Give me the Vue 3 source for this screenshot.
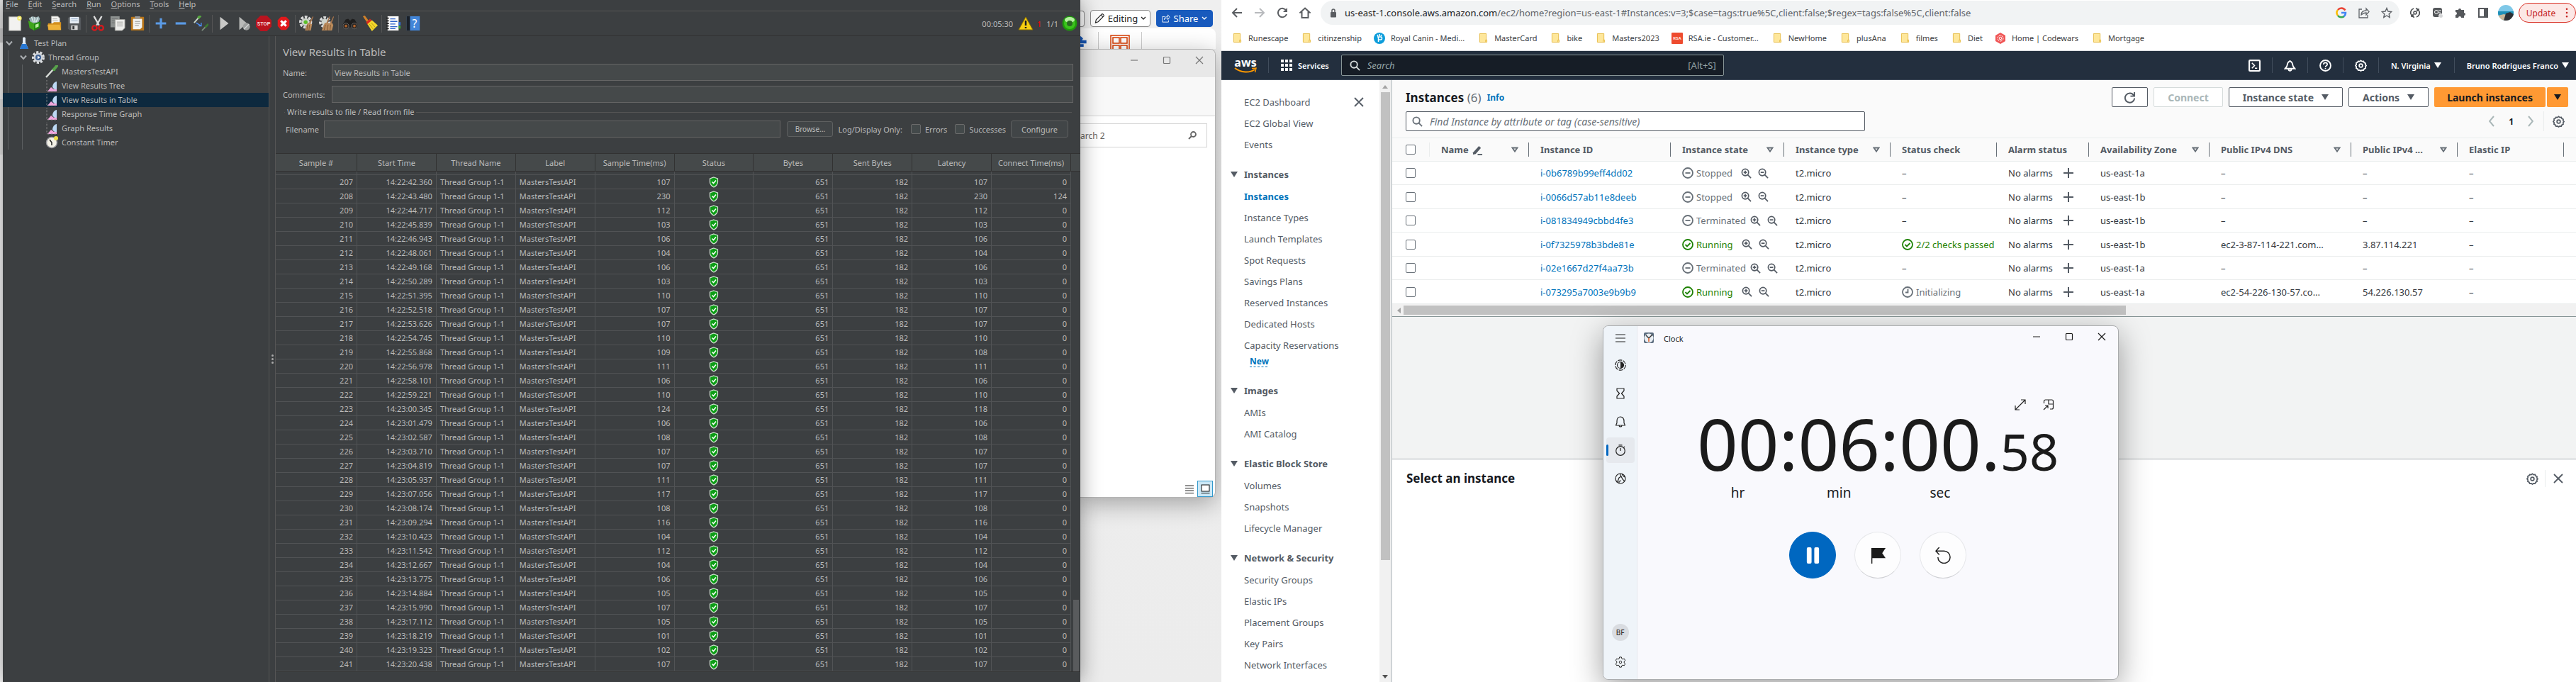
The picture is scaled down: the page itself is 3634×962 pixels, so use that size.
<script setup>
const menus = ['File', 'Edit', 'Search', 'Run', 'Options', 'Tools', 'Help']

const toolGroups = [
  ['new', 'templates', 'open', 'save'],
  ['cut', 'copy', 'paste'],
  ['plus', 'minus', 'toggle'],
  ['play', 'playnp', 'stop', 'shutdown'],
  ['clear', 'clearall'],
  ['binoculars', 'broom'],
  ['functions', 'help'],
]

const tree = [
  { label: 'MastersTestAPI', icon: 'pipette' },
  { label: 'View Results Tree', icon: 'graph' },
  { label: 'View Results in Table', icon: 'graph', selected: true },
  { label: 'Response Time Graph', icon: 'graph' },
  { label: 'Graph Results', icon: 'graph' },
  { label: 'Constant Timer', icon: 'timer' },
]

const sampleHeads = ['Sample #', 'Start Time', 'Thread Name', 'Label', 'Sample Time(ms)', 'Status', 'Bytes', 'Sent Bytes', 'Latency', 'Connect Time(ms)']

const samples = [
  ['22:42.360', 107], ['22:43.480', 230, 230, 124], ['22:44.717', 112], ['22:45.839', 103], ['22:46.943', 106],
  ['22:48.061', 104], ['22:49.168', 106], ['22:50.289', 103], ['22:51.395', 110], ['22:52.518', 107],
  ['22:53.626', 107], ['22:54.745', 110], ['22:55.868', 109, 108], ['22:56.978', 111], ['22:58.101', 106],
  ['22:59.221', 110], ['23:00.345', 124, 118], ['23:01.479', 106], ['23:02.587', 108], ['23:03.710', 107],
  ['23:04.819', 107], ['23:05.937', 111], ['23:07.056', 117], ['23:08.174', 108], ['23:09.294', 116],
  ['23:10.423', 104], ['23:11.542', 112], ['23:12.667', 104], ['23:13.775', 106], ['23:14.884', 105],
  ['23:15.990', 107], ['23:17.112', 105], ['23:18.219', 101], ['23:19.323', 102], ['23:20.438', 107],
].map(([t, ms, latency = ms, connect = 0], i) => ({ id: 207 + i, start: '14:' + t, ms, latency, connect }))

const bookmarks = [
  { t: 'Runescape' }, { t: 'citinzenship' }, { t: 'Royal Canin - Medi...', icon: 'royal' }, { t: 'MasterCard' }, { t: 'bike' },
  { t: 'Masters2023' }, { t: 'RSA.ie - Customer...', icon: 'rsa' }, { t: 'NewHome' }, { t: 'plusAna' }, { t: 'filmes' },
  { t: 'Diet' }, { t: 'Home | Codewars', icon: 'codewars' }, { t: 'Mortgage' },
]

const navTop = ['EC2 Dashboard', 'EC2 Global View', 'Events']
const navGroups = [
  { title: 'Instances', items: ['Instances', 'Instance Types', 'Launch Templates', 'Spot Requests', 'Savings Plans', 'Reserved Instances', 'Dedicated Hosts', 'Capacity Reservations'], isNew: true },
  { title: 'Images', items: ['AMIs', 'AMI Catalog'] },
  { title: 'Elastic Block Store', items: ['Volumes', 'Snapshots', 'Lifecycle Manager'] },
  { title: 'Network & Security', items: ['Security Groups', 'Elastic IPs', 'Placement Groups', 'Key Pairs', 'Network Interfaces'] },
]

const columns = [
  { t: 'Name', edit: true, sort: true }, { t: 'Instance ID' }, { t: 'Instance state', sort: true }, { t: 'Instance type', sort: true },
  { t: 'Status check' }, { t: 'Alarm status' }, { t: 'Availability Zone', sort: true }, { t: 'Public IPv4 DNS', sort: true },
  { t: 'Public IPv4 ...', sort: true }, { t: 'Elastic IP' },
]

const instances = [
  { id: 'i-0b6789b99eff4dd02', state: 'Stopped', check: '', zone: 'us-east-1a', dns: '–', ip: '–' },
  { id: 'i-0066d57ab11e8deeb', state: 'Stopped', check: '', zone: 'us-east-1b', dns: '–', ip: '–' },
  { id: 'i-081834949cbbd4fe3', state: 'Terminated', check: '', zone: 'us-east-1b', dns: '–', ip: '–' },
  { id: 'i-0f7325978b3bde81e', state: 'Running', check: '2/2 checks passed', zone: 'us-east-1b', dns: 'ec2-3-87-114-221.com…', ip: '3.87.114.221' },
  { id: 'i-02e1667d27f4aa73b', state: 'Terminated', check: '', zone: 'us-east-1a', dns: '–', ip: '–' },
  { id: 'i-073295a7003e9b9b9', state: 'Running', check: 'Initializing', zone: 'us-east-1a', dns: 'ec2-54-226-130-57.co…', ip: '54.226.130.57' },
]

const clockNav = [
  { icon: 'focus', name: 'Focus sessions' }, { icon: 'hourglass', name: 'Timer' }, { icon: 'alarm', name: 'Alarm' },
  { icon: 'stopwatch', name: 'Stopwatch', on: true }, { icon: 'world', name: 'World clock' },
]
</script>

<template>
  <div class="desktop">
    <svg class="sprite" aria-hidden="true">
      <symbol id="new" viewBox="0 0 24 24"><rect x="3" y="2" width="18" height="21" fill="#f2f2f0" stroke="#b9b9b5" /><circle cx="19" cy="4" r="3.5" fill="#f6ec6a" /><circle cx="19" cy="4" r="1.5" fill="#fffbd0" /></symbol>
      <symbol id="templates" viewBox="0 0 24 24"><path d="M3 4l6-3 4 2 5-2 2 4-3 7H6z" fill="#9ab3b5" /><path d="M7 2l3 8M12 2l0 8M17 3l-3 7" stroke="#dfe9ea" stroke-width="1.5" /><path d="M2 8l9 4v11l-7-4z" fill="#3ea51c" /><path d="M11 12l10-3-1 10-9 4z" fill="#1f8a0d" /><path d="M13 14l5-2v5l-5 2z" fill="#b8ee9d" /></symbol>
      <symbol id="open" viewBox="0 0 24 24"><path d="M7 1h10l3 3v9H7z" fill="#f4f4f1" stroke="#a3a39e" /><path d="M9 5h7M9 8h8" stroke="#a9a9a4" /><path d="M2 12h7l2-2h11v12H2z" fill="#d28f1e" /><path d="M1 14h19l2 8H3z" fill="#eeb23a" /></symbol>
      <symbol id="save" viewBox="0 0 24 24"><path d="M2 3h20v19H4l-2-2z" fill="#54585c" /><rect x="5" y="2" width="14" height="10" fill="#e6edf5" /><path d="M7 5h10M7 8h10" stroke="#8fa9c4" /><rect x="7" y="15" width="10" height="7" fill="#d9dadb" /><rect x="9" y="16" width="3" height="5" fill="#34373a" /></symbol>
      <symbol id="cut" viewBox="0 0 24 24"><path d="M6 1l8 14M18 1l-8 14" stroke="#dcdcdc" stroke-width="2.5" /><circle cx="7" cy="19" r="3.5" fill="none" stroke="#d8191c" stroke-width="2.5" /><circle cx="17" cy="19" r="3.5" fill="none" stroke="#d8191c" stroke-width="2.5" /></symbol>
      <symbol id="copy" viewBox="0 0 24 24"><rect x="1" y="1" width="14" height="17" fill="#8d9190" /><path d="M3 5h9M3 8h9M3 11h9" stroke="#6d7070" /><path d="M8 6h15v13l-4 4H8z" fill="#ededeb" stroke="#a0a09b" /><path d="M11 10h9M11 13h9M11 16h9" stroke="#9b9b98" /></symbol>
      <symbol id="paste" viewBox="0 0 24 24"><rect x="2" y="2" width="20" height="21" rx="1" fill="#b87519" /><path d="M5 5h14v13l-3 3H5z" fill="#f3f3f0" /><rect x="8" y="1" width="8" height="4" fill="#97999b" /><path d="M8 9h8M8 12h8M8 15h6" stroke="#8f8f8b" /></symbol>
      <symbol id="plus" viewBox="0 0 24 24"><path d="M12 4v16M4 12h16" stroke="#5b9be6" stroke-width="3.5" /></symbol>
      <symbol id="minus" viewBox="0 0 24 24"><path d="M4 12h16" stroke="#5b9be6" stroke-width="3.5" /></symbol>
      <symbol id="toggle" viewBox="0 0 24 24"><path d="M2 11l8-9" stroke="#cfdccf" stroke-width="2" /><path d="M8 4l4-4" stroke="#55a63f" stroke-width="4" /><path d="M5 11l8 5m0-5v5h-4" stroke="#4b8cf0" stroke-width="1.5" fill="none" /><path d="M14 23l8-8" stroke="#7c8a7c" stroke-width="2" /><path d="M19 18l5-5" stroke="#3c7a2f" stroke-width="3" /></symbol>
      <symbol id="play" viewBox="0 0 24 24"><path d="M6 2l13 10L6 22z" fill="#c9c9c7" /></symbol>
      <symbol id="playnp" viewBox="0 0 24 24"><path d="M5 2l12 10L5 22z" fill="#b9bab8" /><circle cx="16" cy="17" r="5.5" fill="#9d9f9e" /><path d="M12 21l8-8" stroke="#d4d5d4" stroke-width="1.5" /></symbol>
      <symbol id="stop" viewBox="0 0 24 24"><path d="M7 0h10l7 7v10l-7 7H7l-7-7V7z" fill="#b9141f" /><text x="12" y="15" text-anchor="middle" font-size="8" font-weight="700" font-family="Roboto, sans-serif" fill="#f5d9da">STOP</text></symbol>
      <symbol id="shutdown" viewBox="0 0 24 24"><path d="M8 2h8l5 5v9l-5 6H8l-5-6V7z" fill="#e0191b" /><path d="M8 8l8 8M16 8l-8 8" stroke="#fff" stroke-width="3.5" /></symbol>
      <symbol id="clear" viewBox="0 0 24 24"><circle cx="10" cy="10" r="8" fill="none" stroke="#dadada" stroke-width="4" stroke-dasharray="4 2" /><circle cx="10" cy="10" r="6" fill="#cfd4cc" /><circle cx="10" cy="10" r="3" fill="#5cbf2a" /><path d="M21 1l1 1-5 11-2-1z" fill="#a9744a" /><path d="M13 11l7 2-2 10H9z" fill="#b98a5b" /><path d="M13 14l-1 8M16 14l-1 9" stroke="#80552e" /></symbol>
      <symbol id="clearall" viewBox="0 0 24 24"><circle cx="9" cy="10" r="7" fill="none" stroke="#dadada" stroke-width="4" stroke-dasharray="4 2" /><circle cx="9" cy="10" r="5" fill="#cfd4cc" /><path d="M16 1l1 1-4 11-2-1zM22 1l1 1-4 11-2-1z" fill="#a9744a" /><path d="M9 11l12 1 1 3-2 8H4z" fill="#b98a5b" /><path d="M10 14l-2 8M14 14l-1 9M18 14l-1 8" stroke="#80552e" /></symbol>
      <symbol id="binoculars" viewBox="0 0 24 24"><path d="M5 6l4-1 3 3 3-3 4 1 5 9v3H0v-3z" fill="#1e1e1e" /><circle cx="5.5" cy="16" r="4.5" fill="#2b2623" stroke="#6a6a6a" /><circle cx="18.5" cy="16" r="4.5" fill="#2b2623" stroke="#6a6a6a" /><circle cx="5.5" cy="16" r="2" fill="#b0632c" /><circle cx="18.5" cy="16" r="2" fill="#b0632c" /></symbol>
      <symbol id="broom" viewBox="0 0 24 24"><path d="M1 1l3-1 6 8-3 2z" fill="#d0812a" /><path d="M6 10l6-5 3 3-7 6z" fill="#d92a1d" /><path d="M8 13l7-6 9 8-9 9z" fill="#f3d62b" /><path d="M11 13l6 8M14 11l6 7" stroke="#b99610" /></symbol>
      <symbol id="functions" viewBox="0 0 24 24"><rect x="3" y="1" width="17" height="22" fill="#fafafa" /><path d="M20 10h3v5h-3z" fill="#2f6fd8" /><path d="M20 16h3v4h-3z" fill="#38a832" /><path d="M7 5h8M7 9h11M7 13h8M7 17h11M7 20h8" stroke="#2d62c9" stroke-width="1.5" /><path d="M1 4h4M1 8h4M1 12h4M1 16h4M1 20h4" stroke="#222" stroke-width="2" /></symbol>
      <symbol id="help" viewBox="0 0 24 24"><rect x="2" y="1" width="20" height="22" fill="#4285d8" /><rect x="2" y="1" width="5" height="22" fill="#1a2028" /><text x="14" y="18" text-anchor="middle" font-size="17" font-family="Noto Sans, sans-serif" fill="#fff">?</text></symbol>
      <symbol id="flask" viewBox="0 0 18 18"><path d="M7 1h4v7l4 9H3l4-9z" fill="#d8e6f4" /><path d="M6 10h6l3 7H3z" fill="#2878d4" /><path d="M9 0v8" stroke="#f6fafe" /></symbol>
      <symbol id="gear" viewBox="0 0 18 18"><circle cx="9" cy="9" r="7" fill="none" stroke="#dfe1e3" stroke-width="4" stroke-dasharray="3 2" /><circle cx="9" cy="9" r="6.5" fill="#cfd3d8" /><circle cx="9" cy="9" r="4" fill="#3c5f92" /><path d="M8 6.5l3.5 2.5L8 11.5z" fill="#fff" /></symbol>
      <symbol id="pipette" viewBox="0 0 18 18"><path d="M1 17l10-11" stroke="#d8dcd8" stroke-width="2.5" /><path d="M10 4l4 4" stroke="#2f6d28" stroke-width="2" /><path d="M12 6l4-5" stroke="#58a34b" stroke-width="4" stroke-linecap="round" /></symbol>
      <symbol id="graph" viewBox="0 0 18 18"><path d="M3 17l5-6 4 3 4-3v6z" fill="#f0a6dd" /><path d="M10 11c0-4 3-8 6-8v11c-2 0-4 0-6-3z" fill="#bcd8f4" /><path d="M2 1v16h14" stroke="#8d8d8d" fill="none" stroke-dasharray="1 1" /></symbol>
      <symbol id="timer" viewBox="0 0 18 18"><circle cx="9" cy="9" r="7.5" fill="#f3f1e6" stroke="#97979d" stroke-width="1.5" /><path d="M6 5l3 4v4" stroke="#222" stroke-width="1.5" fill="none" /><circle cx="15" cy="3" r="3" fill="#efe04e" /></symbol>
      <symbol id="shield" viewBox="0 0 14 16"><path d="M7 1l5.5 2v5c0 3-3 6-5.5 7C4.500 14 1.500 11 1.500 8V3z" fill="#0d9d16" stroke="#cfe3cf" stroke-width="1.2" /><path d="M4.500 7.500l2 2 3.500-4" stroke="#fff" stroke-width="1.6" fill="none" /></symbol>
      <symbol id="chev" viewBox="0 0 10 8"><path d="M1 1.500l4 4.500 4-4.500" fill="none" stroke="#a9adb0" stroke-width="2" /></symbol>
      <symbol id="search" viewBox="0 0 16 16"><circle cx="6.5" cy="6.5" r="5" fill="none" stroke="currentColor" stroke-width="2" /><path d="M10 10l5 5" stroke="currentColor" stroke-width="2" /></symbol>
      <symbol id="zin" viewBox="0 0 16 16"><circle cx="6.5" cy="6.5" r="5" fill="none" stroke="currentColor" stroke-width="1.8" /><path d="M10 10l5 5M6.500 4v5M4 6.500h5" stroke="currentColor" stroke-width="1.8" /></symbol>
      <symbol id="zout" viewBox="0 0 16 16"><circle cx="6.5" cy="6.5" r="5" fill="none" stroke="currentColor" stroke-width="1.8" /><path d="M10 10l5 5M4 6.500h5" stroke="currentColor" stroke-width="1.8" /></symbol>
      <symbol id="stopped" viewBox="0 0 16 16"><circle cx="8" cy="8" r="7" fill="none" stroke="currentColor" stroke-width="1.8" /><path d="M4.500 8h7" stroke="currentColor" stroke-width="1.8" /></symbol>
      <symbol id="ok" viewBox="0 0 16 16"><circle cx="8" cy="8" r="7" fill="none" stroke="currentColor" stroke-width="1.8" /><path d="M4.500 8l2.500 2.500 4.500-4.500" stroke="currentColor" stroke-width="1.8" fill="none" /></symbol>
      <symbol id="pending" viewBox="0 0 16 16"><circle cx="8" cy="8" r="7" fill="none" stroke="currentColor" stroke-width="1.8" /><path d="M8.500 3.500v5H5" stroke="currentColor" stroke-width="1.8" fill="none" /></symbol>
      <symbol id="cog" viewBox="0 0 18 18"><path d="M9 1.500l1.800 1.300 2.200-.2.900 2 2 1-.2 2.200L17 9l-1.300 1.700.2 2.200-2 1-.9 2-2.200-.2L9 17l-1.800-1.300-2.200.2-.9-2-2-1 .2-2.200L1 9l1.300-1.700L2.100 5l2-1L5 2.600l2.200.2z" fill="none" stroke="currentColor" stroke-width="1.8" /><circle cx="9" cy="9" r="2.5" fill="none" stroke="currentColor" stroke-width="1.8" /></symbol>
      <symbol id="close" viewBox="0 0 14 14"><path d="M1 1l12 12M13 1L1 13" stroke="currentColor" stroke-width="1.8" /></symbol>
      <symbol id="thinx" viewBox="0 0 12 12"><path d="M1 1l10 10M11 1L1 11" stroke="currentColor" stroke-width="1.2" /></symbol>
      <symbol id="thinbox" viewBox="0 0 12 12"><rect x="1.5" y="1.5" width="9" height="9" rx="1" fill="none" stroke="currentColor" stroke-width="1.2" /></symbol>
      <symbol id="thinmin" viewBox="0 0 12 12"><path d="M1 6h10" stroke="currentColor" stroke-width="1.2" /></symbol>
      <symbol id="folder" viewBox="0 0 14 16"><path d="M1.500 1.500h10v10h1v3h-11z" fill="#fee79b" stroke="#e6bb45" stroke-width="1" /><path d="M10.500 14v-3h2" fill="none" stroke="#e6bb45" /></symbol>
      <symbol id="royal" viewBox="0 0 16 16"><circle cx="8" cy="8" r="8" fill="#0d9ddb" /><path d="M5 6h5c2 0 2 4 0 4H6M6.500 6v7M5 3l1 2M8 2v3M11 3l-1 2" stroke="#fff" stroke-width="1.5" fill="none" /></symbol>
      <symbol id="rsa" viewBox="0 0 16 16"><rect width="16" height="16" rx="1" fill="#ee4b2f" /><text x="8" y="10" text-anchor="middle" font-size="6" font-weight="700" font-family="Roboto, sans-serif" fill="#ffe1da">RSA</text></symbol>
      <symbol id="codewars" viewBox="0 0 16 16"><path d="M8 0l7 4v8l-7 4-7-4V4z" fill="#f05656" /><circle cx="8" cy="8" r="4" fill="none" stroke="#fff" stroke-dasharray="3 1" /><circle cx="8" cy="8" r="1.8" fill="none" stroke="#fff" /></symbol>
    </svg>

    <div class="edge" aria-hidden="true"></div>

    <section class="jmeter" aria-label="JMeter">
      <nav class="menubar">
        <button v-for="m in menus" :key="m"><u>{{ m[0] }}</u>{{ m.slice(1) }}</button>
      </nav>
      <div class="toolbar">
        <template v-for="(g, gi) in toolGroups" :key="gi">
          <span v-if="gi" class="sep"></span>
          <button v-for="t in g" :key="t" :aria-label="t"><svg><use :href="'#' + t" /></svg></button>
        </template>
        <div class="run-state">
          <span>00:05:30</span>
          <svg class="warn" viewBox="0 0 22 20"><path d="M11 1l10 18H1z" fill="#f6cf12" stroke="#8a6f00" /><path d="M11 6v7M11 15v2" stroke="#1c1c1c" stroke-width="2.5" /></svg>
          <span class="red">1</span>
          <span class="threads">1/1</span>
          <svg class="lamp" viewBox="0 0 22 22"><circle cx="11" cy="11" r="10.5" fill="#1f9a0c" /><circle cx="11" cy="11" r="8" fill="#3bc41c" /><ellipse cx="11" cy="6" rx="7" ry="4" fill="#b5f0a0" /><circle cx="11" cy="11" r="4" fill="#2a6a22" /></svg>
        </div>
      </div>

      <div class="jbody">
        <ul class="tree">
          <li>
            <div class="node"><svg class="arrow"><use href="#chev" /></svg><svg class="ni"><use href="#flask" /></svg>Test Plan</div>
            <ul class="guide g1">
              <li>
                <div class="node n2"><svg class="arrow"><use href="#chev" /></svg><svg class="ni"><use href="#gear" /></svg>Thread Group</div>
                <ul class="guide g2">
                  <li v-for="n in tree" :key="n.label" class="node leaf" :class="{ selected: n.selected }"><svg class="ni"><use :href="'#' + n.icon" /></svg>{{ n.label }}</li>
                </ul>
              </li>
            </ul>
          </li>
        </ul>
        <div class="splitter"><i></i><i></i><i></i></div>
        <div class="panel">
          <h1>View Results in Table</h1>
          <div class="field"><label for="jname">Name:</label><input id="jname" value="View Results in Table"></div>
          <div class="field"><label for="jcom">Comments:</label><input id="jcom"></div>
          <fieldset>
            <legend>Write results to file / Read from file</legend>
            <div class="file-row">
              <label for="jfile">Filename</label><input id="jfile">
              <button class="browse">Browse...</button>
              <span class="log">Log/Display Only:</span>
              <label class="check"><input type="checkbox">Errors</label>
              <label class="check second"><input type="checkbox">Successes</label>
              <button class="conf">Configure</button>
            </div>
          </fieldset>
          <div class="results">
            <table>
              <thead><tr><th v-for="h in sampleHeads" :key="h">{{ h }}</th></tr></thead>
              <tbody>
                <tr class="sliver" aria-hidden="true"><td v-for="h in sampleHeads" :key="h"></td></tr>
                <tr v-for="s in samples" :key="s.id">
                  <td>{{ s.id }}</td><td>{{ s.start }}</td><td class="l">Thread Group 1-1</td><td class="l">MastersTestAPI</td><td>{{ s.ms }}</td>
                  <td class="c"><svg class="shield"><use href="#shield" /></svg></td><td>651</td><td>182</td><td>{{ s.latency }}</td><td>{{ s.connect }}</td>
                </tr>
              </tbody>
            </table>
            <div class="vbar"><div class="vhead"></div><div class="vthumb"></div></div>
          </div>
        </div>
      </div>
    </section>

    <section class="behind" aria-label="Background windows">
      <div class="word-top">
        <span class="stub"></span>
        <button class="editing"><svg viewBox="0 0 16 16"><path d="M1.500 14.500l1-4.500L11 1.500c1-1 4 1.500 3 3L5.500 13z M10 3l3 3" fill="none" stroke="#222" stroke-width="1.2" /></svg>Editing<svg class="cv" viewBox="0 0 8 8"><path d="M1 2l3 3 3-3" fill="none" stroke="#222" stroke-width="1.3" /></svg></button>
        <button class="share"><svg viewBox="0 0 14 14"><path d="M5 4H1v9h10v-3M4 9c0-4 3-5 6-5V1l3 4-3 4V6C7 6 5 7 4 9z" fill="none" stroke="#fff" /></svg>Share<svg class="cv" viewBox="0 0 8 8"><path d="M1 2l3 3 3-3" fill="none" stroke="#fff" stroke-width="1.3" /></svg></button>
      </div>
      <div class="ribbon">
        <svg class="blue" viewBox="0 0 14 20"><path d="M0 0h1l4 4-2 3H0zM0 7h11v6H0zM0 14h6v5H0z" fill="#185abd" /></svg>
        <span class="rd"></span>
        <svg class="grid4" viewBox="0 0 28 20"><path d="M1 20V1h26v19M4 4h9v8H4zM15 4h9v8h-9zM4 20v-5h9v5M15 20v-5h9v5" fill="none" stroke="#d83b01" stroke-width="1.5" /></svg>
        <span class="rd"></span>
      </div>
      <div class="explorer">
        <div class="etitle"><svg><use href="#thinmin" /></svg><svg><use href="#thinbox" /></svg><svg><use href="#thinx" /></svg></div>
        <div class="eribbon"></div>
        <div class="econtent">
          <div class="esearch"><span>arch 2</span><svg viewBox="0 0 12 12"><circle cx="7.5" cy="4.5" r="3.5" fill="none" stroke="#666" stroke-width="1.8" /><path d="M5 7l-4 4" stroke="#666" stroke-width="2" /></svg></div>
          <div class="eview">
            <svg viewBox="0 0 14 14"><path d="M1 2h12M1 5.500h12M1 9h12M1 12.500h12" stroke="#222" /></svg>
            <svg class="big" viewBox="0 0 22 23"><rect x=".5" y=".5" width="21" height="22" fill="#cce8f6" stroke="#3399cc" /><rect x="6" y="6" width="11" height="9" fill="#fff" stroke="#111" /><path d="M5.500 17.500h12" stroke="#111" /></svg>
          </div>
        </div>
      </div>
    </section>

    <section class="chrome" aria-label="Browser">
      <div class="cbar">
        <button class="nv" aria-label="Back"><svg viewBox="0 0 16 16"><path d="M15 8H2M8 2L2 8l6 6" fill="none" stroke="#5a5d61" stroke-width="2" /></svg></button>
        <button class="nv" aria-label="Forward"><svg viewBox="0 0 16 16"><path d="M1 8h13M8 2l6 6-6 6" fill="none" stroke="#b8babd" stroke-width="2" /></svg></button>
        <button class="nv" aria-label="Reload"><svg viewBox="0 0 16 16"><path d="M13.500 5A6.200 6.200 0 1 0 14 10" fill="none" stroke="#5a5d61" stroke-width="2" /><path d="M15 1v6H9z" fill="#5a5d61" /></svg></button>
        <button class="nv" aria-label="Home"><svg viewBox="0 0 16 16"><path d="M8 1.500l6.500 6H12.500V15h-9V7.500H1.500z" fill="none" stroke="#5a5d61" stroke-width="2" /></svg></button>
        <div class="omni">
          <svg class="lock" viewBox="0 0 10 13"><rect x="1" y="5" width="8" height="7.5" rx="1" fill="#5a5d61" /><path d="M3 5V3a2 2 0 0 1 4 0v2" fill="none" stroke="#5a5d61" stroke-width="1.5" /></svg>
          <a href="#" class="url"><b>us-east-1.console.aws.amazon.com</b>/ec2/home?region=us-east-1#Instances:v=3;$case=tags:true%5C,client:false;$regex=tags:false%5C,client:false</a>
          <svg class="o16" viewBox="0 0 16 16"><path d="M13.500 4.500A6.500 6.500 0 0 0 3 4" fill="none" stroke="#ea4335" stroke-width="2.5" /><path d="M3 4a6.500 6.500 0 0 0 0 8" fill="none" stroke="#fbbc05" stroke-width="2.5" /><path d="M3 12a6.500 6.500 0 0 0 9 1" fill="none" stroke="#34a853" stroke-width="2.5" /><path d="M8 8h6c0 2-1 4-2.500 5" fill="none" stroke="#4285f4" stroke-width="2.5" /></svg>
          <svg class="o16" viewBox="0 0 16 16"><path d="M5 3H1v12h12v-4M4 11c0-4 3-6 7-6V2l4 4.500L11 11V8C8 8 6 9 4 11z" fill="none" stroke="#5f6368" stroke-width="1.3" /></svg>
          <svg class="o16" viewBox="0 0 16 16"><path d="M8 1.500l2 4.500 4.800.5-3.600 3.200 1 4.800L8 12l-4.200 2.500 1-4.800L1.200 6.500 6 6z" fill="none" stroke="#5f6368" stroke-width="1.4" /></svg>
        </div>
        <div class="exts">
          <svg viewBox="0 0 16 16"><path d="M6 2a6 6 0 0 0-3 9.500M10 14a6 6 0 0 0 3-9.500M2 13h3v-3M14 3h-3v3M9 1.500A6 6 0 0 1 13 5M7 14.500A6 6 0 0 1 3 11" fill="none" stroke="#474a4d" stroke-width="1.6" /><circle cx="8" cy="8" r="2" fill="none" stroke="#474a4d" stroke-width="1.5" /></svg>
          <svg viewBox="0 0 16 16"><rect x="1" y="1" width="13" height="13" rx="3" fill="#55585b" /><circle cx="6" cy="7" r="2.5" fill="none" stroke="#fff" /><path d="M9 5h4M9 8h3" stroke="#fff" /><circle cx="12.5" cy="12.5" r="3" fill="#d4d5d6" stroke="#fff" /></svg>
          <svg viewBox="0 0 16 16"><path d="M1 4h4a2 2 0 1 1 4 0h4v4a2 2 0 1 1 0 4v3H9a2 2 0 1 0-4 0H1v-4a2 2 0 1 0 0-4z" fill="#55585c" /></svg>
          <svg viewBox="0 0 16 16"><rect x="2" y="2" width="12" height="12" fill="none" stroke="#55585c" stroke-width="2" /><path d="M9 2h5v12H9z" fill="#55585c" /></svg>
          <svg class="ava" viewBox="0 0 22 22"><clipPath id="av"><circle cx="11" cy="11" r="11" /></clipPath><g clip-path="url(#av)"><path d="M0 0h22v22H0z" fill="#7fc8e8" /><path d="M0 9h22v6H0z" fill="#1e90b8" /><path d="M0 15l8-2 14 3v6H0z" fill="#c8b79a" /><path d="M8 22l3-10 6-2 5 3v9z" fill="#2e3136" /></g></svg>
        </div>
        <button class="update">Update<svg viewBox="0 0 4 16"><path d="M2 2h.01M2 8h.01M2 14h.01" stroke="#c5221f" stroke-width="3" stroke-linecap="round" /></svg></button>
      </div>
      <nav class="bookmarks">
        <a v-for="b in bookmarks" :key="b.t" href="#"><svg v-if="b.icon" class="fav"><use :href="'#' + b.icon" /></svg><svg v-else class="fold"><use href="#folder" /></svg>{{ b.t }}</a>
      </nav>

      <header class="aws">
        <a href="#" class="logo" aria-label="aws"><span>aws</span><svg viewBox="0 0 32 8"><path d="M1 1c9 7 21 7 28 2" fill="none" stroke="#f90" stroke-width="2" /><path d="M25 1.500l6-.5-1.500 6" fill="none" stroke="#f90" stroke-width="1.5" /></svg></a>
        <span class="adiv"></span>
        <button class="services"><svg viewBox="0 0 16 16"><path d="M0 2h4M6 2h4M12 2h4M0 8h4M6 8h4M12 8h4M0 14h4M6 14h4M12 14h4" stroke="#fff" stroke-width="4" /></svg>Services</button>
        <label class="asearch"><svg><use href="#search" /></svg><input placeholder="Search" aria-label="Search"><span>[Alt+S]</span></label>
        <div class="aright">
          <button aria-label="CloudShell"><svg viewBox="0 0 16 16"><rect x="1" y="1" width="14" height="14" rx="1" fill="none" stroke="#fff" stroke-width="2" /><path d="M4.500 4.500L8 8l-3.500 3.500M8.500 11.500h3" stroke="#fff" stroke-width="1.5" fill="none" /></svg></button>
          <button aria-label="Notifications"><svg viewBox="0 0 16 16"><path d="M8 1v1M8 2.500c4 0 3 5 4.500 7l2 2.500h-13l2-2.500C5 7.500 4 2.500 8 2.500zM6 12.500c0 3 4 3 4 0" fill="none" stroke="#fff" stroke-width="1.8" /></svg></button>
          <button aria-label="Help"><svg viewBox="0 0 16 16"><circle cx="8" cy="8" r="7" fill="none" stroke="#fff" stroke-width="1.8" /><path d="M5.500 6.500c0-3.300 5-3.300 5 0 0 1.700-2.500 1.500-2.500 3.500M8 11.200v1.600" fill="none" stroke="#fff" stroke-width="1.6" /></svg></button>
          <button aria-label="Settings"><svg><use href="#cog" /></svg></button>
          <button class="txt">N. Virginia<i></i></button>
          <button class="txt">Bruno Rodrigues Franco<i></i></button>
        </div>
      </header>

      <div class="console">
        <aside class="side">
          <ul class="top">
            <li v-for="n in navTop" :key="n"><a href="#">{{ n }}</a></li>
          </ul>
          <button class="side-x" aria-label="Close navigation"><svg><use href="#close" /></svg></button>
          <div v-for="g in navGroups" :key="g.title" class="grp">
            <h2><i></i>{{ g.title }}</h2>
            <ul><li v-for="(n, k) in g.items" :key="n"><a href="#" :class="{ on: g.isNew && k === 0 }">{{ n }}</a></li></ul>
            <a v-if="g.isNew" href="#" class="newtag">New</a>
          </div>
        </aside>
        <div class="sbar"><i class="up"></i><div></div><i class="down"></i></div>
        <main>
          <div class="mhead">
            <div class="mrow">
              <h2>Instances <span>(6)</span></h2><a href="#">Info</a>
              <div class="acts">
                <button class="btn ref" aria-label="Refresh"><svg viewBox="0 0 18 18"><path d="M15 6A7 7 0 1 0 16 10M16 1v6h-6" fill="none" stroke="#545b64" stroke-width="2" /></svg></button>
                <button class="btn" disabled>Connect</button>
                <button class="btn">Instance state<i></i></button>
                <button class="btn">Actions<i></i></button>
                <div class="launch"><button>Launch instances</button><button aria-label="More launch options"><i></i></button></div>
              </div>
            </div>
            <div class="mrow two">
              <label class="find"><svg><use href="#search" /></svg><input placeholder="Find Instance by attribute or tag (case-sensitive)" aria-label="Find instance"></label>
              <div class="pager">
                <button aria-label="Previous page"><svg viewBox="0 0 8 16"><path d="M7 1L1 8l6 7" fill="none" stroke="#aab7b8" stroke-width="2" /></svg></button>
                <b>1</b>
                <button aria-label="Next page"><svg viewBox="0 0 8 16"><path d="M1 1l6 7-6 7" fill="none" stroke="#aab7b8" stroke-width="2" /></svg></button>
                <button class="pcog" aria-label="Preferences"><svg><use href="#cog" /></svg></button>
              </div>
            </div>
          </div>
          <div class="scroller">
            <table class="inst">
              <colgroup><col class="w53"><col class="w140"><col class="w200"><col class="w160"><col class="w150"><col class="w150"><col class="w130"><col class="w170"><col class="w200"><col class="w150"><col class="w150"><col></colgroup>
              <thead><tr>
                <th class="first"><div><input type="checkbox" aria-label="Select all"></div></th>
                <th v-for="c in columns" :key="c.t"><div>{{ c.t }}<svg v-if="c.edit" class="pen" viewBox="0 0 16 16"><path d="M1 12l9-10 3 3-8 9-4 1z" fill="#545b64" /><path d="M8 15h7" stroke="#545b64" stroke-width="2" /></svg><svg v-if="c.sort" class="srt" viewBox="0 0 10 8"><path d="M1.500 1.500h7L5 6.500z" fill="none" stroke="#687078" stroke-width="2" /></svg></div></th>
                <th></th>
              </tr></thead>
              <tbody>
                <tr v-for="r in instances" :key="r.id">
                  <td class="first"><input type="checkbox" :aria-label="r.id"></td><td></td>
                  <td><a href="#">{{ r.id }}</a></td>
                  <td><div class="st" :class="{ ok: r.state === 'Running' }"><svg><use :href="r.state === 'Running' ? '#ok' : '#stopped'" /></svg>{{ r.state }}<svg class="z" :class="{ tight: r.state === 'Terminated' }"><use href="#zin" /></svg><svg class="z z2"><use href="#zout" /></svg></div></td>
                  <td>t2.micro</td>
                  <td class="chk"><div v-if="r.check" class="st" :class="{ ok: r.check[0] === '2' }"><svg><use :href="r.check[0] === '2' ? '#ok' : '#pending'" /></svg>{{ r.check }}</div><template v-else>–</template></td>
                  <td><div class="alarm">No alarms<svg viewBox="0 0 14 14"><path d="M7 0v14M0 7h14" stroke="#545b64" stroke-width="2" /></svg></div></td>
                  <td>{{ r.zone }}</td><td>{{ r.dns }}</td><td>{{ r.ip }}</td><td>–</td><td></td>
                </tr>
              </tbody>
            </table>
            <div class="hbar"><i></i><div></div></div>
          </div>
          <div class="gap"></div>
          <div class="detail">
            <h2>Select an instance</h2>
            <button aria-label="Preferences"><svg><use href="#cog" /></svg></button><span></span>
            <button aria-label="Close"><svg class="dx"><use href="#close" /></svg></button>
          </div>
        </main>

        <section class="clock" aria-label="Clock">
          <nav>
            <button class="burger" aria-label="Menu"><svg viewBox="0 0 16 16"><path d="M1 3h14M1 8h14M1 13h14" stroke="#222" stroke-width="1.2" /></svg></button>
            <button v-for="c in clockNav" :key="c.name" :class="{ on: c.on }" :aria-label="c.name">
              <svg v-if="c.icon === 'focus'" viewBox="0 0 16 16"><circle cx="8" cy="8" r="7.2" fill="none" stroke="#222" stroke-width="1.2" stroke-dasharray="6 1.5" /><circle cx="8" cy="8" r="4.5" fill="none" stroke="#222" stroke-width="1.2" /><path d="M8 3.500a4.500 4.500 0 0 1 0 9z" fill="#222" /></svg>
              <svg v-else-if="c.icon === 'hourglass'" viewBox="0 0 16 16"><path d="M3 1h10v3L9.500 8l3.500 4v3H3v-3l3.500-4L3 4z" fill="none" stroke="#222" stroke-width="1.2" stroke-linejoin="round" /></svg>
              <svg v-else-if="c.icon === 'alarm'" viewBox="0 0 16 16"><path d="M8 1C4.500 1 3 4 3 7v2.500L1.500 13h13L13 9.500V7c0-3-1.500-6-5-6zM6 13.500c.5 2 3.500 2 4 0" fill="none" stroke="#222" stroke-width="1.2" stroke-linejoin="round" /></svg>
              <svg v-else-if="c.icon === 'stopwatch'" viewBox="0 0 16 16"><circle cx="8" cy="9" r="6.3" fill="none" stroke="#222" stroke-width="1.2" /><path d="M8 5v4M5.500 .8h5M13 3l1 1" stroke="#222" stroke-width="1.2" /></svg>
              <svg v-else viewBox="0 0 16 16"><circle cx="8" cy="8" r="7" fill="none" stroke="#222" stroke-width="1.2" /><path d="M7 1L9 5 6 7 4 12l-1.500 1M9 5l2 4 3 3M10 1.500l2 3 3 2M6 15v-3l3-1" fill="none" stroke="#222" stroke-width="1.2" /></svg>
            </button>
            <span class="bf">BF</span>
            <button aria-label="Settings"><svg viewBox="0 0 18 18"><path d="M7.500 1h3l.6 2.400 1.600.9L15 3.600l1.600 2.600-1.700 1.700v2.200l1.700 1.700L15 14.400l-2.300-.7-1.600.9-.6 2.400h-3l-.6-2.400-1.600-.9-2.300.7-1.600-2.600 1.700-1.700V7.900L1.400 6.200 3 3.600l2.300.7 1.600-.9z" fill="none" stroke="#222" stroke-width="1.1" /><circle cx="9" cy="9" r="2" fill="none" stroke="#222" /></svg></button>
          </nav>
          <div class="cmain">
            <div class="ctitle">
              <svg class="ci" viewBox="0 0 16 16"><rect x="1" y="0" width="14" height="15" rx="2" fill="#5a6b7d" /><circle cx="8" cy="8" r="6.5" fill="#e9eef3" /><path d="M8 8L4 4M8 8l5-5" stroke="#333" stroke-width="1.4" /><path d="M8 8v5" stroke="#e2622a" stroke-width="1.6" /></svg>
              <span>Clock</span>
              <div class="wc"><svg><use href="#thinmin" /></svg><svg><use href="#thinbox" /></svg><svg><use href="#thinx" /></svg></div>
            </div>
            <div class="watch">
              <div class="views">
                <button aria-label="Expand"><svg viewBox="0 0 16 16"><path d="M1 15L15 1M9 1h6v6M1 9v6h6" fill="none" stroke="#222" stroke-width="1.2" /></svg></button>
                <button aria-label="Keep on top"><svg viewBox="0 0 16 16"><path d="M1.500 6V3a2 2 0 0 1 2-2h9a2 2 0 0 1 2 2v9a2 2 0 0 1-2 2H10M8 1v6h6.500M1 15l6-6M3 9h4v4" fill="none" stroke="#222" stroke-width="1.2" /></svg></button>
              </div>
              <span class="d">00</span><span class="d">:</span><span class="d">06</span><span class="d">:</span><span class="d">00</span><span class="d">.<small>58</small></span>
              <span class="u">hr</span><span></span><span class="u">min</span><span></span><span class="u">sec</span><span></span>
            </div>
            <div class="ctl">
              <button class="pause" aria-label="Pause"><svg viewBox="0 0 24 24"><path d="M5 2h3v20H5zM16 2h3v20h-3z" fill="#fff" stroke="#fff" stroke-width="4" stroke-linejoin="round" /></svg></button>
              <button aria-label="Lap"><svg viewBox="0 0 24 24"><path d="M2 1h21l-5 7.500 5 7.500H3.500v8H2z" fill="#1b1b1b" /></svg></button>
              <button aria-label="Reset"><svg viewBox="0 0 24 24"><path d="M6 0L1 5.500 6 11M1 5.500h12a9 9 0 1 1-9 9" fill="none" stroke="#1b1b1b" stroke-width="1.5" /></svg></button>
            </div>
          </div>
        </section>
      </div>
    </section>
  </div>
</template>

<style>
body { margin: 0; }
</style>

<style scoped>
* { box-sizing: border-box; }
button { font: inherit; color: inherit; background: none; border: 0; padding: 0; display: inline-flex; align-items: center; justify-content: center; white-space: nowrap; }
a { text-decoration: none; color: inherit; }
ul { list-style: none; margin: 0; padding: 0; }
h1, h2 { margin: 0; }
input { font: inherit; color: inherit; margin: 0; min-width: 0; }
svg { flex: none; display: block; }
.sprite { position: absolute; width: 0; height: 0; }
.desktop { display: grid; grid-template-columns: 4px minmax(0, 1520fr) minmax(0, 199fr) minmax(0, 1911fr); min-height: 100vh; overflow: hidden; background: #efefef; font-family: "Noto Sans", "Open Sans", sans-serif; }
.edge { background: linear-gradient(#e6e6e6 0 40px, #cfcfcf 40px 60px, #f8f8f8 60px 140px, #e6e6e6 140px 218px, #f8f8f8 218px); }

/* JMeter */
.jmeter { background: #3c3f41; color: #bbb; font-size: 11px; display: flex; flex-direction: column; position: relative; z-index: 2; box-shadow: 0 0 28px rgba(0, 0, 0, .4); }
.menubar { display: flex; gap: 14px; height: 16px; padding: 0 4px; border-bottom: 1px solid #555; }
.menubar button { height: 12px; line-height: 12px; display: block; }
.toolbar { height: 35px; border-bottom: 1px solid #323232; display: flex; align-items: center; padding: 0 4px 0 3px; }
.toolbar button { width: 28px; height: 28px; }
.toolbar button svg { width: 22px; height: 22px; }
.sep { width: 1px; height: 25px; margin: 0 2px; background: #555; }
.run-state { margin-left: auto; display: flex; align-items: center; }
.warn { width: 22px; height: 20px; margin: 0 5px 0 7px; }
.red { color: #f00; margin-right: 7px; }
.lamp { width: 22px; height: 22px; margin-left: 5px; }
.jbody { flex: 1; display: grid; grid-template-columns: 376px 9px minmax(0, 1fr); }
.tree { border-right: 1px solid #555; line-height: 20px; }
.node { display: flex; align-items: center; height: 20px; padding-left: 4px; }
.arrow { width: 10px; height: 8px; margin-right: 7px; }
.ni { width: 18px; height: 18px; margin-right: 5px; }
.n2 { padding-left: 24px; }
.guide { position: relative; }
.guide::before { content: ""; position: absolute; top: 0; bottom: 0; left: 7px; width: 1px; background: #5c5f61; }
.g2::before { left: 27px; }
.leaf { padding-left: 60px; }
.selected { background: #0d293e; }
.splitter { border-right: 1px solid #555; display: flex; flex-direction: column; gap: 2px; align-items: center; justify-content: center; }
.splitter i { width: 3px; height: 3px; border-radius: 2px; background: #aaa; }
.panel { display: flex; flex-direction: column; padding-bottom: 13px; }
h1 { font-size: 15px; font-weight: 400; line-height: 20px; padding: 12px 0 7px 10px; }
.field { display: flex; align-items: center; margin: 0 10px 7px; height: 24px; }
.field label { width: 69px; flex: none; }
.field input, .file-row > input { flex: 1; height: 24px; background: #45494a; border: 1px solid #646464; padding: 0 3px; outline: 0; }
fieldset { border: 0; border-top: 1px solid #555; margin: 0 12px; padding: 0; min-width: 0; }
legend { margin-left: 1px; padding: 0 3px; line-height: 12px; }
.file-row { display: flex; align-items: center; height: 24px; padding: 0 5px 0 2px; margin-top: 6px; }
.file-row > label:first-child { margin-right: 7px; }
.file-row button { border: 1px solid #5e6060; border-radius: 3px; background: #414547; }
.browse { width: 65px; height: 22px; margin: 0 7px 0 9px; font-size: 10px; }
.check { display: flex; align-items: center; margin-left: 12px; }
.check.second { margin-left: 11px; }
.check input { appearance: none; width: 14px; height: 14px; border: 1px solid #6b6b6b; border-radius: 2px; background: #43494a; margin-right: 6px; }
.conf { width: 81px; height: 24px; margin-left: 7px; }
.results { margin-top: 22px; display: flex; align-items: stretch; border-top: 1px solid #323232; border-bottom: 1px solid #323232; }
.results table { flex: 1; width: 100%; min-width: 0; table-layout: fixed; border-spacing: 0; }
.results th { height: 25px; padding: 0; font-weight: 400; background: #45494a; border-right: 1px solid #323232; border-bottom: 1px solid #323232; white-space: nowrap; }
.results th:first-child { width: 115px; }
.results td { height: 20px; padding: 0 5px; line-height: 19px; text-align: right; border-right: 1px solid #515355; border-bottom: 1px solid #515355; white-space: nowrap; }
.results .sliver td { height: 5px; padding: 0; line-height: 4px; }
.results td.l { text-align: left; }
.results td.c { text-align: center; }
.shield { width: 14px; height: 16px; margin: 0 auto; }
.vbar { width: 13px; flex: none; display: flex; flex-direction: column; justify-content: space-between; align-items: center; }
.vhead { width: 13px; height: 25px; background: #45494a; border-bottom: 1px solid #323232; }
.vthumb { width: 8px; height: 101px; background: #595b5d; }

/* Windows partly covered by JMeter */
.behind { display: grid; grid-template-rows: 40px 29px minmax(0, 1fr) 260px; padding-right: 8px; background: linear-gradient(#efefef, #ececec); font-size: 13px; color: #222; }
.word-top { display: flex; align-items: center; padding: 12px 4px 0 0; justify-content: flex-end; gap: 8px; }
.stub { width: 6px; height: 23px; border: 1px solid #8a8a8a; border-left: 0; border-radius: 0 4px 4px 0; background: #fff; margin-right: auto; }
.editing, .share { width: 85px; height: 24px; border: 1px solid #8a8a8a; border-radius: 4px; background: #fff; gap: 4px; }
.editing svg { width: 15px; height: 16px; }
.share { width: 80px; background: #185abd; border-color: #185abd; color: #fff; gap: 5px; }
.share svg { width: 12px; height: 12px; }
.editing .cv, .share .cv { width: 8px; height: 8px; }
.ribbon { background: #fff; border-radius: 0 8px 0 0; display: flex; align-items: flex-end; gap: 16px; }
.blue { width: 11px; height: 20px; margin-right: -2px; }
.grid4 { width: 28px; height: 20px; }
.rd { width: 1px; height: 24px; background: #ccc; }
.explorer { background: #fff; border: 1px solid #b4b4b4; border-left: 0; border-radius: 0 8px 8px 0; display: flex; flex-direction: column; box-shadow: 0 8px 34px rgba(0, 0, 0, .32); }
.etitle { height: 38px; background: #e8e8e8; border-radius: 0 8px 0 0; display: flex; justify-content: flex-end; gap: 34px; padding: 9px 16px 0 0; color: #777; border-bottom: 1px solid #ddd; }
.etitle svg { width: 12px; height: 12px; }
.eribbon { height: 56px; background: #f8f8f8; border-bottom: 1px solid #d4d4d4; }
.econtent { flex: 1; display: flex; flex-direction: column; justify-content: space-between; padding-top: 10px; }
.esearch { height: 34px; margin-right: 11px; border: 1px solid #d4d4d4; border-left: 0; display: flex; align-items: center; justify-content: space-between; padding-right: 14px; font-size: 12px; color: #666; }
.esearch svg { width: 12px; height: 12px; }
.eview { display: flex; justify-content: flex-end; align-items: center; gap: 4px; padding-right: 3px; }
.eview svg { width: 14px; height: 14px; }
.eview .big { width: 22px; height: 23px; }

/* Browser */
.chrome { background: #fff; position: relative; z-index: 1; display: flex; flex-direction: column; color: #3c4043; font-size: 13px; }
.cbar { display: flex; align-items: center; height: 36px; padding-left: 14px; }
.nv { width: 32px; height: 32px; padding-right: 16px; }
.nv svg { width: 16px; height: 16px; }
.omni { flex: 1; min-width: 0; margin-left: -2px; height: 34px; border-radius: 17px; background: #f1f3f4; display: flex; align-items: center; padding: 0 10px 0 13px; color: #5f6368; }
.lock { width: 10px; height: 13px; margin-right: 11px; }
.url { flex: 1; min-width: 0; white-space: nowrap; overflow: hidden; font-size: 13px; }
.url b { font-weight: 400; color: #202124; }
.o16 { width: 16px; height: 16px; margin-left: 16px; }
.exts { display: flex; align-items: center; gap: 16px; margin: 0 7px 0 14px; }
.exts svg { width: 16px; height: 16px; }
.exts .ava { width: 22px; height: 22px; margin-left: -3px; }
.update { width: 81px; height: 28px; border: 1px solid #d93025; border-radius: 14px; background: #fce8e6; color: #c5221f; font-size: 12px; gap: 14px; }
.update svg { width: 4px; height: 14px; }
.bookmarks { display: flex; align-items: center; height: 36px; padding-left: 16px; gap: 20px; border-bottom: 1px solid #dadce0; font-size: 11px; }
.bookmarks a { display: flex; align-items: center; white-space: nowrap; }
.fold { width: 13px; height: 15px; margin-right: 9px; }
.fav { width: 16px; height: 16px; margin: 0 8px 0 -3px; }
.aws { height: 41px; background: #232f3e; border-bottom: 1px solid #414d5c; display: flex; align-items: center; padding-left: 18px; color: #fff; font-size: 12px; }
.logo { width: 32px; display: flex; flex-direction: column; font: 700 16px/13px "Open Sans", sans-serif; text-align: center; }
.logo svg { width: 32px; height: 8px; }
.adiv { width: 1px; height: 22px; background: #414d5c; margin: 0 17px 0 16px; }
.services { gap: 8px; font-weight: 600; font-size: 11px; }
.services svg { width: 16px; height: 16px; }
.asearch { width: 540px; height: 30px; margin-left: 17px; background: #161d26; border: 1px solid #879596; border-radius: 2px; display: flex; align-items: center; padding: 0 10px 0 11px; color: #95a5a6; font-size: 13px; }
.asearch svg { width: 15px; height: 15px; color: #d5dbdb; margin-right: 10px; }
.asearch input { flex: 1; border: 0; background: none; padding: 0; outline: 0; }
.asearch input::placeholder, .find input::placeholder { color: inherit; font-style: italic; opacity: 1; }
.aright { margin-left: auto; display: flex; align-items: center; }
.aright button { width: 50px; height: 22px; border-right: 1px solid #414d5c; }
.aright button svg { width: 17px; height: 17px; }
.aright .txt { width: auto; padding: 0 18px 0 17px; font-weight: 600; font-size: 11px; gap: 5px; }
.aright .txt:last-child { border: 0; padding-right: 10px; }
.txt i, .btn i, .launch i, h2 i { border: 5px solid transparent; border-top: 8px solid currentColor; border-bottom: 0; }

.console { flex: 1; display: grid; grid-template-columns: 223px 18px minmax(0, 1fr); position: relative; }
.side { position: relative; padding: 16px 0 0 32px; color: #545b64; font-size: 13px; line-height: 30px; }
.side li { height: 30px; white-space: nowrap; }
.side-x { position: absolute; right: 22px; top: 24px; }
.side-x svg { width: 14px; height: 14px; }
.grp { margin-top: 12px; }
.grp h2 { font-size: 13px; font-weight: 700; line-height: 30px; display: flex; align-items: center; margin-left: -19px; gap: 9px; height: 30px; }
.grp ul { margin-top: 1px; }
.on { color: #0073bb; font-weight: 700; }
.newtag { display: block; width: 25px; margin-left: 8px; line-height: 15px; font-size: 12px; font-weight: 700; color: #0073bb; border-bottom: 1px dashed #0073bb; height: 16px; margin-bottom: 18px; }
.sbar { background: #f1f1f1; border-right: 2px solid #cfd4d6; display: flex; flex-direction: column; align-items: center; padding: 7px 1px 5px; }
.sbar div { width: 13px; height: 660px; background: #c1c1c1; margin: 5px 0 auto; }
.sbar i { border: 4px solid transparent; }
.sbar .up { border-top: 0; border-bottom: 5px solid #a3a3a3; }
.sbar .down { border-bottom: 0; border-top: 5px solid #505050; }
main { display: flex; flex-direction: column; min-width: 0; overflow: hidden; font-size: 13px; color: #16191f; }
.mhead { background: #fafafa; padding: 10px 11px 9px 19px; border-bottom: 1px solid #eaeded; }
.mrow { display: flex; align-items: center; height: 28px; }
.mrow.two { margin-top: 6px; }
.mhead h2 { font-size: 17px; font-weight: 700; }
.mhead h2 span { font-weight: 400; color: #687078; }
.mrow > a { font-size: 12px; font-weight: 700; color: #0073bb; margin-left: 8px; }
.acts { margin-left: auto; display: flex; gap: 8px; font-size: 14px; }
.btn { height: 28px; border: 1px solid #545b64; border-radius: 2px; background: #fff; color: #545b64; font-weight: 700; padding: 0 19px; gap: 11px; }
.btn svg { width: 17px; height: 17px; }
.btn.ref { padding: 0 16px; }
.btn:disabled { color: #aab7b8; border-color: #d5dbdb; }
.launch { display: flex; gap: 2px; }
.launch button { height: 28px; background: #f93; color: #16191f; font-weight: 700; padding: 0 18px; border-radius: 2px; }
.launch button + button { padding: 0 10px; }
.find { width: 648px; height: 28px; border: 1px solid #545b64; border-radius: 2px; background: #fff; display: flex; align-items: center; padding: 0 8px; color: #687078; font-size: 14px; }
.find svg { width: 15px; height: 15px; margin-right: 10px; }
.find input { flex: 1; border: 0; padding: 0; outline: 0; background: none; }
.pager { margin-left: auto; display: flex; align-items: center; height: 28px; }
.pager button svg { width: 8px; height: 16px; }
.pager b { margin: 0 20px; font-size: 12px; }
.pager .pcog { margin-left: 14px; padding: 0 5px 0 12px; height: 28px; border-left: 1px solid #eaeded; color: #545b64; }
.pager .pcog svg { width: 17px; height: 17px; }
.scroller { overflow: hidden; }
.inst { width: 100%; table-layout: fixed; border-spacing: 0; }
.w53 { width: 53px; } .w130 { width: 130px; } .w140 { width: 140px; } .w150 { width: 150px; } .w160 { width: 160px; } .w170 { width: 170px; } .w200 { width: 200px; }
.inst th { padding: 0; height: 33px; background: #fafafa; border-bottom: 1px solid #eaeded; text-align: left; color: #545b64; font-weight: 700; }
.inst th div { height: 20px; border-right: 1px solid #687078; padding: 0 14px 0 16px; display: flex; align-items: center; white-space: nowrap; }
.inst th.first div { padding-left: 19px; border-color: #eaeded; }
.pen { width: 15px; height: 15px; margin-left: 5px; }
.srt { width: 10px; height: 8px; margin-left: auto; }
.inst input { appearance: none; display: block; width: 14px; height: 14px; border: 1px solid #687078; border-radius: 2px; background: #fff; }
.inst td { height: 33px; padding: 0 0 0 16px; border-bottom: 1px solid #eaeded; white-space: nowrap; overflow: hidden; color: #333840; }
.inst tr:nth-child(2n) td { height: 34px; }
.inst td.first { padding-left: 19px; }
.inst td a { color: #0073bb; }
.st, .alarm { display: flex; align-items: center; color: #687078; }
.st svg { width: 16px; height: 16px; margin-right: 4px; }
.st .z { width: 15px; height: 15px; margin: 0 9px 0 12px; color: #545b64; }
.st .z.tight { margin-left: 6px; }
.st .z2 { margin: 0; }
.st.ok { color: #1d8102; }
.alarm { color: inherit; }
.alarm svg { width: 14px; height: 14px; margin-left: 15px; }
.hbar { height: 17px; background: #f1f1f1; display: flex; align-items: center; }
.hbar i { border: 4px solid transparent; border-right: 5px solid #a3a3a3; border-left: 0; margin: 0 4px 0 7px; }
.hbar div { width: 61%; height: 13px; background: #c1c1c1; }
.gap { height: 202px; background: #f2f3f3; border-top: 1px solid #879596; border-bottom: 1px solid #aab0b3; }
.detail { display: flex; align-items: center; padding: 14px 18px 0 20px; color: #545b64; }
.detail h2 { font-size: 17px; line-height: 26px; color: #16191f; margin-right: auto; }
.detail svg { width: 17px; height: 17px; }
.detail .dx { width: 14px; height: 14px; }
.detail span { width: 1px; height: 24px; background: #eaeded; margin: 0 11px 0 9px; }

/* Clock window */
.clock { position: absolute; left: 538px; top: 346px; z-index: 1; width: 728px; height: 500px; border: 1px solid #a9abad; border-radius: 8px; background: #f9f9fd; display: grid; grid-template-columns: 48px minmax(0, 1fr); overflow: hidden; color: #1b1b1b; box-shadow: 0 12px 44px rgba(0, 0, 0, .38); }
.clock nav { background: #eff4f9; border-right: 1px solid #e3e7ec; display: flex; flex-direction: column; align-items: center; padding: 0 0 2px; }
.clock nav button { width: 40px; height: 36px; border-radius: 4px; margin-bottom: 4px; position: relative; }
.clock nav .burger { height: 33px; }
.clock nav button svg { width: 16px; height: 16px; }
.clock nav .on { background: #e6e9ee; }
.clock nav .on::before { content: ""; position: absolute; left: 0; top: 10px; width: 3px; height: 16px; border-radius: 2px; background: #0067c0; }
.bf { margin: auto 0 12px; width: 24px; height: 24px; border-radius: 50%; background: #d9dce1; font-size: 10px; line-height: 24px; text-align: center; }
.cmain { display: flex; flex-direction: column; align-items: center; }
.ctitle { align-self: stretch; height: 34px; display: flex; align-items: center; padding: 0 17px 0 8px; font-size: 11px; }
.ci { width: 16px; height: 16px; margin-right: 13px; }
.wc { margin: 0 0 4px auto; display: flex; gap: 34px; }
.wc svg { width: 12px; height: 12px; }
.watch { margin-top: 67px; display: grid; grid-template-columns: repeat(6, auto); align-items: baseline; }
.views { grid-column: 1 / -1; display: flex; justify-content: flex-end; gap: 24px; height: 20px; padding-right: 6px; }
.views svg { width: 16px; height: 16px; }
.d { font-size: 101px; line-height: 88px; }
.d small { font-size: 72px; line-height: 60px; }
.u { font-size: 19px; line-height: 28px; text-align: center; margin-top: 12px; }
.ctl { display: flex; gap: 26px; margin-top: 41px; }
.ctl button { width: 66px; height: 66px; border-radius: 50%; background: #fdfdfe; border: 1px solid #e6e7ea; border-bottom-color: #cdced2; }
.ctl .pause { background: #0067c0; border-color: #0067c0; }
.ctl svg { width: 23px; height: 23px; }
</style>
